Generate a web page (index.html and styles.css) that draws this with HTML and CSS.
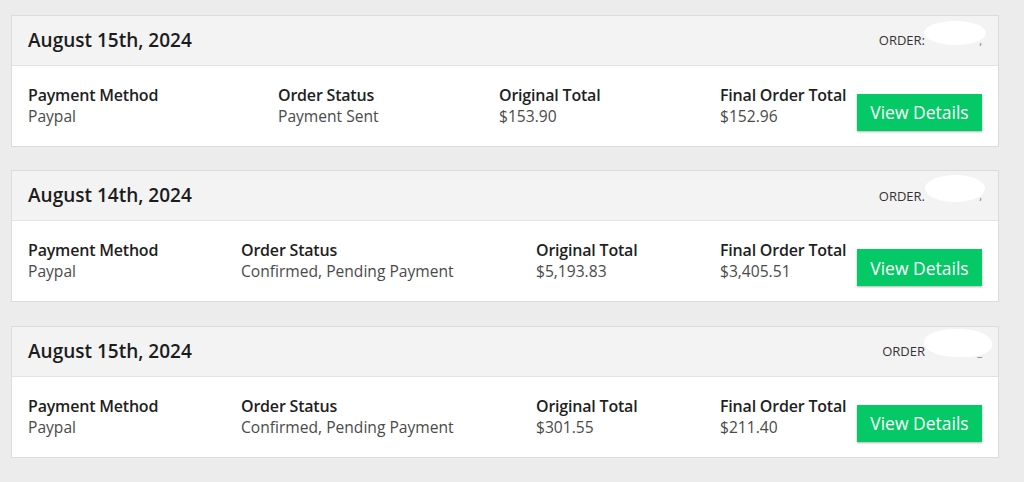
FILE: index.html
```html
<!DOCTYPE html>
<html>
<head>
<meta charset="utf-8">
<link rel="stylesheet" href="styles.css">
</head>
<body>
<div class="list">
  <section class="card">
    <header class="card-head">
      <h2 class="date">August 15th, 2024</h2>
      <div class="order"><span class="order-label">ORDER:</span><span class="tail">,</span><span class="redact r1"></span></div>
    </header>
    <div class="card-body cols-a">
      <div class="field"><div class="label">Payment Method</div><div class="value">Paypal</div></div>
      <div class="field"><div class="label">Order Status</div><div class="value">Payment Sent</div></div>
      <div class="field"><div class="label">Original Total</div><div class="value">$153.90</div></div>
      <div class="field"><div class="label">Final Order Total</div><div class="value">$152.96</div></div>
      <button class="btn">View Details</button>
    </div>
  </section>
  <section class="card">
    <header class="card-head">
      <h2 class="date">August 14th, 2024</h2>
      <div class="order"><span class="order-label">ORDER.</span><span class="tail">,</span><span class="redact r2"></span></div>
    </header>
    <div class="card-body cols-b">
      <div class="field"><div class="label">Payment Method</div><div class="value">Paypal</div></div>
      <div class="field"><div class="label">Order Status</div><div class="value">Confirmed, Pending Payment</div></div>
      <div class="field"><div class="label">Original Total</div><div class="value">$5,193.83</div></div>
      <div class="field"><div class="label">Final Order Total</div><div class="value">$3,405.51</div></div>
      <button class="btn">View Details</button>
    </div>
  </section>
  <section class="card">
    <header class="card-head">
      <h2 class="date">August 15th, 2024</h2>
      <div class="order"><span class="order-label">ORDER</span><span class="tail">_</span><span class="redact r3"></span></div>
    </header>
    <div class="card-body cols-b">
      <div class="field"><div class="label">Payment Method</div><div class="value">Paypal</div></div>
      <div class="field"><div class="label">Order Status</div><div class="value">Confirmed, Pending Payment</div></div>
      <div class="field"><div class="label">Original Total</div><div class="value">$301.55</div></div>
      <div class="field"><div class="label">Final Order Total</div><div class="value">$211.40</div></div>
      <button class="btn">View Details</button>
    </div>
  </section>
</div>
</body>
</html>
```
FILE: styles.css
```css
html, body {
  margin: 0;
  padding: 0;
  background: #ececec;
  font-family: "Open Sans", "Noto Sans", sans-serif;
  color: #222;
}
.list {
  display: flex;
  flex-direction: column;
  gap: 23.5px;
  padding: 14.5px 25px 0 11px;
}
.card {
  background: #fff;
  border: 1px solid #dcdcdc;
}
.card-head {
  display: flex;
  align-items: center;
  justify-content: space-between;
  height: 49px;
  padding: 0 16px;
  background: #f3f3f3;
  border-bottom: 1px solid #e2e2e2;
}
.date {
  margin: 0 0 1px 0;
  font-size: 19px;
  font-weight: 600;
  color: #1c1c1c;
}
.order {
  position: relative;
  display: flex;
  align-items: center;
  font-size: 13px;
  color: #333;
}
.tail {
  display: inline-block;
  width: 57px;
  text-align: right;
  color: #777;
  font-size: 11px;
}
.redact {
  position: absolute;
  top: -10px;
  left: 45px;
  width: 62px;
  height: 24px;
  background: #fff;
  border-radius: 50%;
}
.r2 { top: -12px; height: 27px; left: 46px; width: 60px; }
.r3 { top: -13px; height: 28px; left: 42px; width: 68px; border-radius: 45% 50% 40% 50%; }
.card-body {
  display: grid;
  align-items: start;
  padding: 19px 16px 0 16px;
  height: 61px;
}
.cols-a { grid-template-columns: 250px 221px 221px 137px 125px; }
.cols-b { grid-template-columns: 213px 295px 184px 137px 125px; }
.label {
  font-size: 16px;
  font-weight: 600;
  line-height: 21px;
  color: #1f1f1f;
  letter-spacing: -0.2px;
  white-space: nowrap;
}
.value {
  font-size: 15.6px;
  line-height: 20px;
  color: #4a4a4a;
  white-space: nowrap;
}
.btn {
  width: 125px;
  height: 37px;
  margin-top: 9px;
  border: none;
  background: #05c866;
  color: #fff;
  font-family: inherit;
  font-size: 17.5px;
  box-shadow: 0 1px 2px rgba(0,0,0,0.3);
  cursor: pointer;
}
```
